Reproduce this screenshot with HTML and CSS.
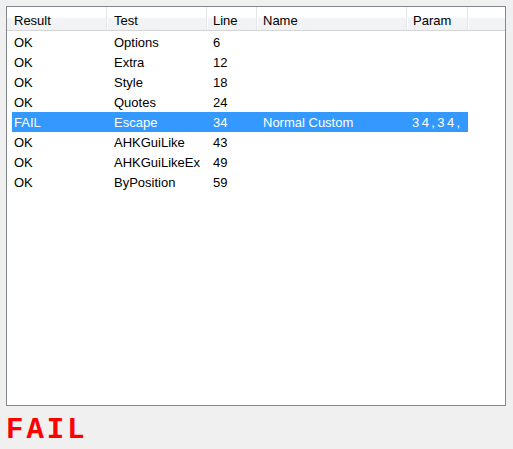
FILE: index.html
```html
<!DOCTYPE html>
<html>
<head>
<meta charset="utf-8">
<link rel="stylesheet" href="styles.css">
</head>
<body>
<div class="list">
  <div class="header">
    <div class="hc c1">Result</div>
    <div class="hc c2">Test</div>
    <div class="hc c3">Line</div>
    <div class="hc c4">Name</div>
    <div class="hc c5">Param</div>
    <div class="hc rest"></div>
  </div>
  <div class="rows">
    <div class="row"><div class="c1">OK</div><div class="c2">Options</div><div class="c3">6</div><div class="c4"></div><div class="c5"></div></div>
    <div class="row"><div class="c1">OK</div><div class="c2">Extra</div><div class="c3">12</div><div class="c4"></div><div class="c5"></div></div>
    <div class="row"><div class="c1">OK</div><div class="c2">Style</div><div class="c3">18</div><div class="c4"></div><div class="c5"></div></div>
    <div class="row"><div class="c1">OK</div><div class="c2">Quotes</div><div class="c3">24</div><div class="c4"></div><div class="c5"></div></div>
    <div class="row sel"><div class="c1">FAIL</div><div class="c2">Escape</div><div class="c3">34</div><div class="c4">Normal Custom</div><div class="c5 param">34,34,</div></div>
    <div class="row"><div class="c1">OK</div><div class="c2">AHKGuiLike</div><div class="c3">43</div><div class="c4"></div><div class="c5"></div></div>
    <div class="row"><div class="c1">OK</div><div class="c2">AHKGuiLikeEx</div><div class="c3">49</div><div class="c4"></div><div class="c5"></div></div>
    <div class="row"><div class="c1">OK</div><div class="c2">ByPosition</div><div class="c3">59</div><div class="c4"></div><div class="c5"></div></div>
  </div>
</div>
<div class="status">FAIL</div>
</body>
</html>
```
FILE: styles.css
```css
html, body {
  margin: 0;
  background: #f0f0f0;
}
body {
  padding: 6px;
  font-family: "Liberation Sans", Arial, sans-serif;
  font-size: 13px;
  color: #000;
}
.list {
  width: 498px;
  height: 398px;
  border: 1px solid #828790;
  background: #fff;
}
.header {
  display: flex;
  height: 23px;
  border-bottom: 1px solid #d5d5d5;
  background: linear-gradient(#ffffff 0%, #ffffff 45%, #f3f4f6 50%, #f1f2f4 100%);
}
.hc {
  box-sizing: border-box;
  line-height: 23px;
  padding-top: 2px;
  padding-left: 6px;
  border-right: 1px solid #e3e5e8;
  box-shadow: 1px 0 0 #fff;
  color: #000;
}
.hc.rest {
  flex: 1;
  border-right: none;
  box-shadow: none;
}
.c1 { width: 100px; }
.c2 { width: 100px; }
.c3 { width: 50px; }
.c4 { width: 150px; }
.c5 { width: 61px; }
.hc.c1 { padding-left: 7px; }
.hc.c2 { padding-left: 7px; }
.rows {
  padding-top: 1px;
}
.row {
  display: flex;
  height: 20px;
  line-height: 21px;
  margin-left: 5px;
  width: 456px;
}
.row > div {
  box-sizing: border-box;
  padding-left: 2px;
  white-space: nowrap;
  overflow: hidden;
}
.row > .c1 { width: 95px; }
.row > .c2 { padding-left: 7px; }
.row > .c3 { padding-left: 6px; }
.row > .c4 { padding-left: 6px; }
.row > .c5 { padding-left: 5px; }
.row.sel {
  background: #3399ff;
  color: #fff;
}
.param {
  letter-spacing: 2.4px;
}
.status {
  font-family: "Liberation Mono", "Courier New", monospace;
  font-weight: bold;
  font-size: 29px;
  letter-spacing: 3px;
  color: #ff0000;
  margin-top: 10px;
  line-height: 30px;
}
```
